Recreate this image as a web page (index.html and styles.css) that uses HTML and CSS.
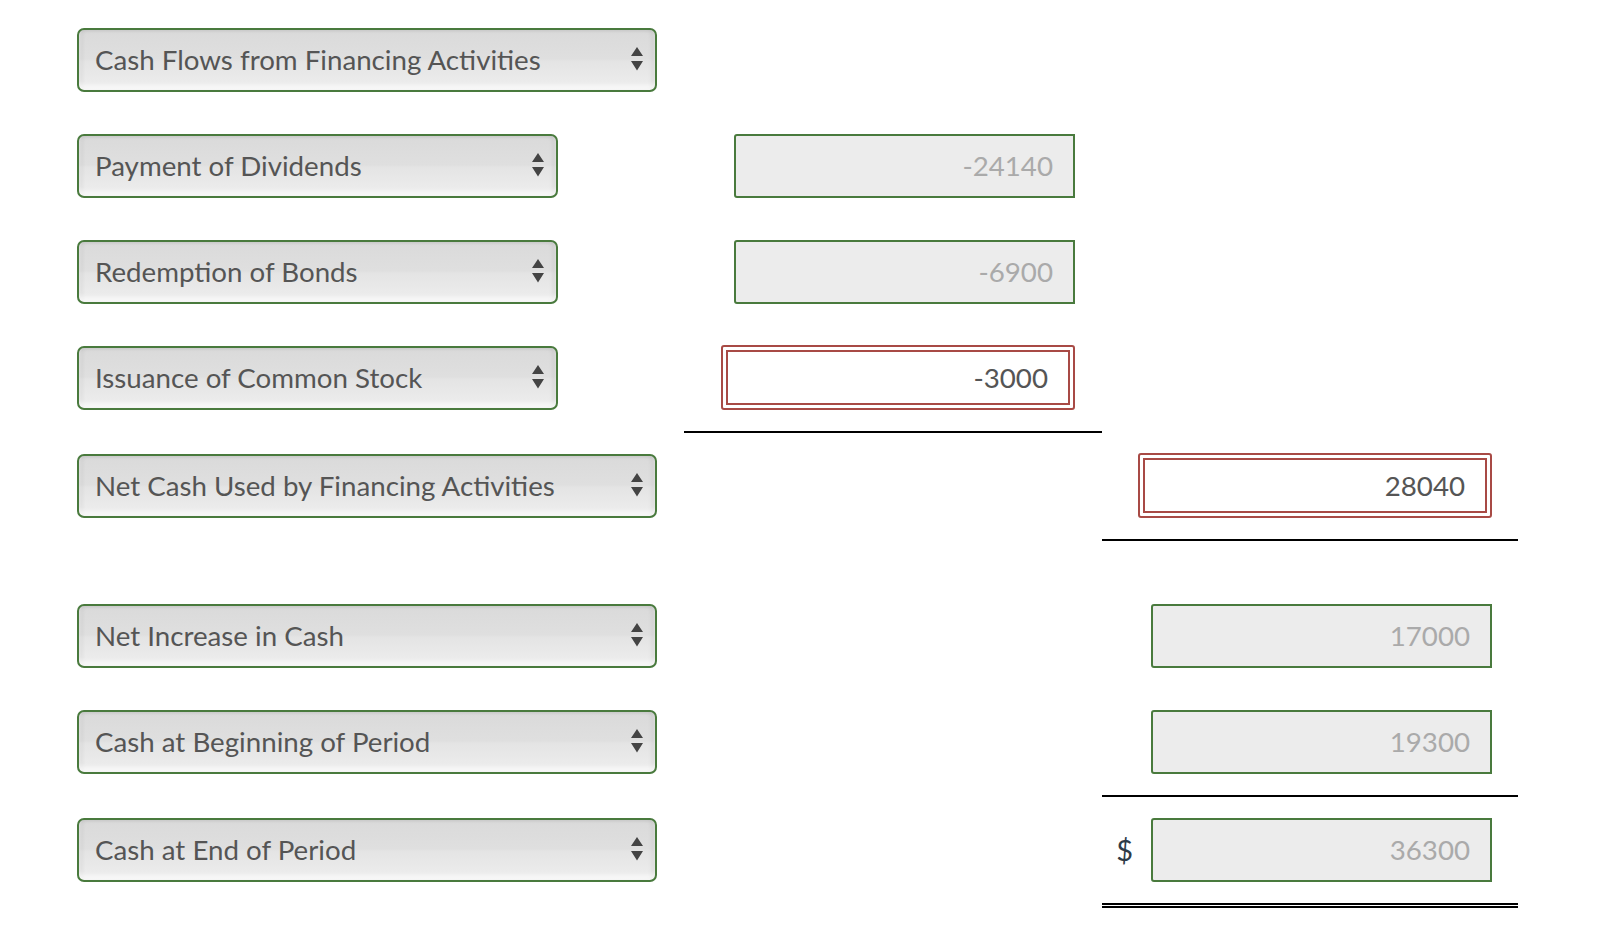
FILE: index.html
```html
<!DOCTYPE html>
<html>
<head>
<meta charset="utf-8">
<link rel="stylesheet" href="styles.css">
</head>
<body>
<div class="sheet">
  <div class="row">
    <div class="c1"><div class="sel long"><span>Cash Flows from Financing Activities</span><svg class="arr" width="12" height="24" viewBox="0 0 12 24"><path d="M6 0 L12 9 L0 9 Z M0 14 L12 14 L6 23.5 Z" fill="#444"/></svg></div></div>
    <div class="c2"></div>
    <div class="c3"></div>
  </div>
  <div class="row">
    <div class="c1"><div class="sel short"><span>Payment of Dividends</span><svg class="arr" width="12" height="24" viewBox="0 0 12 24"><path d="M6 0 L12 9 L0 9 Z M0 14 L12 14 L6 23.5 Z" fill="#444"/></svg></div></div>
    <div class="c2"><div class="inp dis">-24140</div></div>
    <div class="c3"></div>
  </div>
  <div class="row">
    <div class="c1"><div class="sel short"><span>Redemption of Bonds</span><svg class="arr" width="12" height="24" viewBox="0 0 12 24"><path d="M6 0 L12 9 L0 9 Z M0 14 L12 14 L6 23.5 Z" fill="#444"/></svg></div></div>
    <div class="c2"><div class="inp dis">-6900</div></div>
    <div class="c3"></div>
  </div>
  <div class="row">
    <div class="c1"><div class="sel short"><span>Issuance of Common Stock</span><svg class="arr" width="12" height="24" viewBox="0 0 12 24"><path d="M6 0 L12 9 L0 9 Z M0 14 L12 14 L6 23.5 Z" fill="#444"/></svg></div></div>
    <div class="c2 line"><div class="err"><div class="inp bad">-3000</div></div></div>
    <div class="c3"></div>
  </div>
  <div class="row">
    <div class="c1"><div class="sel long"><span>Net Cash Used by Financing Activities</span><svg class="arr" width="12" height="24" viewBox="0 0 12 24"><path d="M6 0 L12 9 L0 9 Z M0 14 L12 14 L6 23.5 Z" fill="#444"/></svg></div></div>
    <div class="c2"></div>
    <div class="c3 line"><div class="err"><div class="inp bad">28040</div></div></div>
  </div>
  <div class="spacer"></div>
  <div class="row">
    <div class="c1"><div class="sel long"><span>Net Increase in Cash</span><svg class="arr" width="12" height="24" viewBox="0 0 12 24"><path d="M6 0 L12 9 L0 9 Z M0 14 L12 14 L6 23.5 Z" fill="#444"/></svg></div></div>
    <div class="c2"></div>
    <div class="c3"><div class="inp dis">17000</div></div>
  </div>
  <div class="row">
    <div class="c1"><div class="sel long"><span>Cash at Beginning of Period</span><svg class="arr" width="12" height="24" viewBox="0 0 12 24"><path d="M6 0 L12 9 L0 9 Z M0 14 L12 14 L6 23.5 Z" fill="#444"/></svg></div></div>
    <div class="c2"></div>
    <div class="c3 line"><div class="inp dis">19300</div></div>
  </div>
  <div class="row">
    <div class="c1"><div class="sel long"><span>Cash at End of Period</span><svg class="arr" width="12" height="24" viewBox="0 0 12 24"><path d="M6 0 L12 9 L0 9 Z M0 14 L12 14 L6 23.5 Z" fill="#444"/></svg></div></div>
    <div class="c2"></div>
    <div class="c3 dbl"><span class="cur">$</span><div class="inp dis">36300</div></div>
  </div>
</div>
</body>
</html>
```

FILE: styles.css
```css
html, body {
  margin: 0;
  padding: 0;
  background: #fff;
}
body {
  font-family: Lato, "Open Sans", "Liberation Sans", sans-serif;
}
.sheet {
  padding-top: 7px;
}
.row {
  display: flex;
}
.c1, .c2, .c3 {
  box-sizing: border-box;
  padding: 21px 0;
  display: flex;
  align-items: flex-start;
}
.c1 {
  width: 684px;
  padding-left: 77px;
}
.c2 {
  width: 418px;
  justify-content: flex-end;
  padding-right: 27px;
}
.c3 {
  width: 416px;
  justify-content: flex-end;
  padding-right: 26px;
}
.line {
  border-bottom: 2px solid #000;
}
.dbl {
  border-bottom: 5px double #000;
}
.spacer {
  height: 42px;
}
.sel {
  box-sizing: border-box;
  height: 64px;
  border: 2px solid #497a3d;
  border-radius: 7px;
  background: linear-gradient(to bottom, #dadada 0%, #dfdfdf 48%, #e4e4e4 52%, #ebebeb 85%, #f3f3f3 100%);
  box-shadow: inset 0 -4px 4px rgba(255, 255, 255, 0.7), inset 3px 0 4px rgba(0, 0, 0, 0.07), inset -3px 0 4px rgba(0, 0, 0, 0.09);
  display: flex;
  align-items: center;
  justify-content: space-between;
  padding: 0 12px 2px 16px;
  color: #555;
  font-size: 27.7px;
}
.sel span {
  white-space: nowrap;
}
.sel.long {
  width: 580px;
}
.sel.short {
  width: 481px;
}
.arr {
  display: block;
  margin-top: -1px;
}
.inp {
  box-sizing: border-box;
  width: 341px;
  height: 64px;
  border: 2px solid #497a3d;
  border-radius: 3px 0 0 3px;
  background: #ececec;
  color: #aaa;
  font-size: 27.7px;
  text-align: right;
  padding-right: 20px;
  line-height: 60px;
}
.err {
  box-sizing: border-box;
  width: 354px;
  height: 65px;
  border: 2px solid #a84a45;
  border-radius: 3px;
  padding: 3px;
  margin-top: -1px;
  background: #fff;
}
.inp.bad {
  width: 100%;
  height: 100%;
  border: 2px solid #a84a45;
  border-radius: 0;
  background: #fff;
  color: #555;
  line-height: 51px;
}
.cur {
  font-size: 29px;
  color: #2e3b47;
  margin-right: 18px;
  line-height: 64px;
}
```
